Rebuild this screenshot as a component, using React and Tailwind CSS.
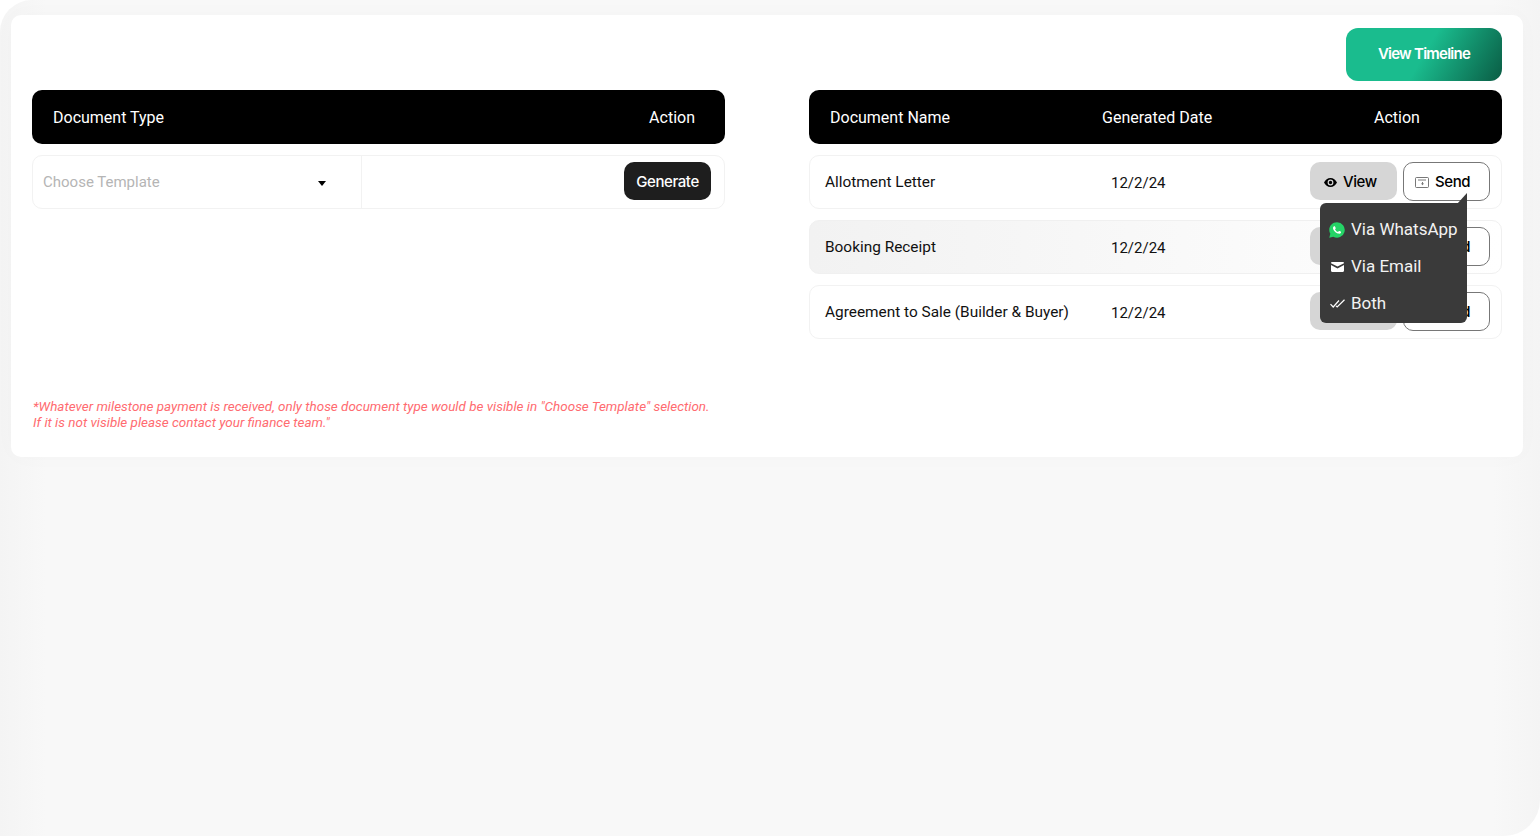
const docs = [
  { name: 'Allotment Letter', date: '12/2/24', hovered: false },
  { name: 'Booking Receipt', date: '12/2/24', hovered: true },
  { name: 'Agreement to Sale (Builder & Buyer)', date: '12/2/24', hovered: false },
]

const btnFont = "font-['Inter',sans-serif] font-medium tracking-[-0.4px]"

function EyeIcon() {
  return (
    <svg width="13" height="9" viewBox="0 0 13 9">
      <path
        fillRule="evenodd"
        d="M6.5 0C3.7 0 1.3 1.8 0 4.5 1.3 7.2 3.7 9 6.5 9S11.7 7.2 13 4.5C11.7 1.8 9.3 0 6.5 0zm0 7.4a2.9 2.9 0 1 1 0-5.8 2.9 2.9 0 0 1 0 5.8zm0-1.2a1.7 1.7 0 1 0 0-3.4 1.7 1.7 0 0 0 0 3.4z"
        fill="#000"
      />
    </svg>
  )
}

function SendIcon() {
  return (
    <svg width="14" height="11" viewBox="0 0 14 11" fill="none" stroke="#555" strokeWidth="0.8">
      <rect x="0.5" y="0.5" width="13" height="10" rx="1" />
      <path d="M3 3h8M7.5 5v2.5M6.3 6.6l1.2 1 1.2-1" />
    </svg>
  )
}

function WhatsappIcon() {
  return (
    <svg width="16" height="16" viewBox="0 0 24 24">
      <path
        d="M12 .5C5.6.5.4 5.6.4 12c0 2 .5 4 1.6 5.8L.4 23.6l6-1.6A11.5 11.5 0 1 0 12 .5z"
        fill="#25d366"
      />
      <path
        d="M17.472 14.382c-.297-.149-1.758-.867-2.03-.967-.273-.099-.471-.148-.67.15-.197.297-.767.966-.94 1.164-.173.199-.347.223-.644.075-.297-.15-1.255-.463-2.39-1.475-.883-.788-1.48-1.761-1.653-2.059-.173-.297-.018-.458.13-.606.134-.133.298-.347.446-.52.149-.174.198-.298.298-.497.099-.198.05-.371-.025-.52-.075-.149-.669-1.612-.916-2.207-.242-.579-.487-.5-.669-.51-.173-.008-.371-.01-.57-.01-.198 0-.52.074-.792.372-.272.297-1.04 1.016-1.04 2.479 0 1.462 1.065 2.875 1.213 3.074.149.198 2.096 3.2 5.077 4.487.709.306 1.262.489 1.694.625.712.227 1.36.195 1.871.118.571-.085 1.758-.719 2.006-1.413.248-.694.248-1.289.173-1.413-.074-.124-.272-.198-.57-.347"
        fill="#fff"
      />
    </svg>
  )
}

function MailIcon() {
  return (
    <svg width="13" height="10" viewBox="0 0 13 10" fill="#fff">
      <path d="M0 1.2C0 .5.5 0 1.2 0h10.6c.7 0 1.2.5 1.2 1.2L6.5 4.6z" />
      <path d="M0 3 6.5 6.4 13 3v5.8c0 .7-.5 1.2-1.2 1.2H1.2C.5 10 0 9.500 0 8.800z" />
    </svg>
  )
}

function BothIcon() {
  return (
    <svg width="15" height="9" viewBox="0 0 15 9" fill="none" stroke="#fff" strokeWidth="1.2">
      <path d="M.5 5.200 3.200 8 9 1.500" />
      <path d="M6 6.800 7.200 8 14.500.8" />
    </svg>
  )
}

// row of the generated documents table
function DocRow({ doc, children }) {
  return (
    <div
      className={`relative flex h-[54px] items-center rounded-[10px] border pl-[15px] pr-[11px] ${
        doc.hovered
          ? 'border-[#f0f0f0] bg-gradient-to-r from-[#f2f2f2] to-white'
          : 'border-[#f2f2f2] bg-white'
      }`}
    >
      <div className="mt-[2px] w-[286px] text-[15.4px] text-[#111]">{doc.name}</div>
      <div className="mt-[2px] text-[15px] text-[#111]">{doc.date}</div>
      <div className={`${btnFont} mb-[2px] ml-auto flex gap-[6px] text-[15px]`}>
        <button className="flex h-[38px] w-[87px] items-center gap-[6px] rounded-[10px] bg-[#d6d6d6] pl-[14px] pt-[4px] text-black">
          <EyeIcon />
          View
        </button>
        <button className="flex h-[39px] w-[87px] items-center gap-[6px] rounded-[10px] border border-[#777] bg-white pl-[11px] pt-[3px] text-black">
          <SendIcon />
          Send
        </button>
      </div>
      {children}
    </div>
  )
}

function SendMenu() {
  return (
    <div className="absolute left-[510px] top-[47px] z-10 w-[147px] rounded-b-md rounded-tl-md bg-[#3a3a3a] pb-[1px] pl-[9px] pt-[8px] text-[17px] text-[#f2f2f2]">
      <svg className="absolute -top-[10px] right-0" width="10" height="11" viewBox="0 0 10 11">
        <path d="M0 11 10 0v11z" fill="#3a3a3a" />
      </svg>
      <div className="flex h-[37px] items-center gap-[6px]">
        <WhatsappIcon />
        Via WhatsApp
      </div>
      <div className="flex h-[37px] items-center gap-[6px]">
        <span className="flex w-4 justify-center">
          <MailIcon />
        </span>
        Via Email
      </div>
      <div className="flex h-[37px] items-center gap-[6px]">
        <span className="flex w-4 justify-center">
          <BothIcon />
        </span>
        Both
      </div>
    </div>
  )
}

export default function App() {
  return (
    <div className="h-[836px] overflow-hidden bg-white font-['Roboto','Liberation_Sans',sans-serif]">
      <div className="h-full rounded-br-[36px] rounded-tl-[32px] bg-[linear-gradient(90deg,#f4f4f4,#f8f8f8_3%,#f8f8f8_97%,#f4f4f4)] pl-[11px] pr-[17px] pt-[15px]">
        <div className="h-[442px] rounded-[10px] bg-white px-[21px] pt-[13px] shadow-[0_0_24px_rgba(0,0,0,0.02)]">
          <div className="flex justify-end">
            <button className="h-[53px] w-[156px] rounded-xl bg-[linear-gradient(120deg,#1abc8e_0%,#1abc8e_50%,#0a5c44_100%)] font-['Inter',sans-serif] text-[15px] font-semibold tracking-[-0.75px] text-white">
              View Timeline
            </button>
          </div>

          <div className="mt-[9px] grid grid-cols-[693px_693px] gap-[84px]">
            <div>
              <div className="flex h-[54px] items-center justify-between rounded-[10px] bg-black pl-[21px] pr-[30px] pt-[2px] text-base text-white">
                <span>Document Type</span>
                <span>Action</span>
              </div>
              <div className="mt-[11px] flex h-[54px] items-center rounded-[10px] border border-[#f2f2f2] bg-white">
                <div className="flex h-full w-[329px] items-center justify-between border-r border-[#f2f2f2] pl-[10px] pr-[35px] pt-px text-[15px] text-[#b5b5b5]">
                  Choose Template
                  <span className="mt-[2px] h-0 w-0 border-x-[4.5px] border-t-[5px] border-x-transparent border-t-black" />
                </div>
                <button className={`${btnFont} mb-[2px] ml-auto mr-[13px] h-[38px] w-[87px] rounded-[10px] bg-[#1e1e1e] pt-[2px] text-[15px] text-white`}>
                  Generate
                </button>
              </div>
              <p className="mt-[190px] pl-px text-[13.45px] italic leading-4 text-[#ff6b70]">
                *Whatever milestone payment is received, only those document type would be visible in "Choose Template" selection.
                <br />
                If it is not visible please contact your finance team."
              </p>
            </div>

            <div>
              <div className="flex h-[54px] items-center rounded-[10px] bg-black pl-[21px] pt-[2px] text-base text-white">
                <span className="w-[272px]">Document Name</span>
                <span className="w-[272px]">Generated Date</span>
                <span>Action</span>
              </div>
              <div className="mt-[11px] flex flex-col gap-[11px]">
                {docs.map((doc, i) => (
                  <DocRow key={doc.name} doc={doc}>
                    {i === 0 && <SendMenu />}
                  </DocRow>
                ))}
              </div>
            </div>
          </div>
        </div>
      </div>
    </div>
  )
}
